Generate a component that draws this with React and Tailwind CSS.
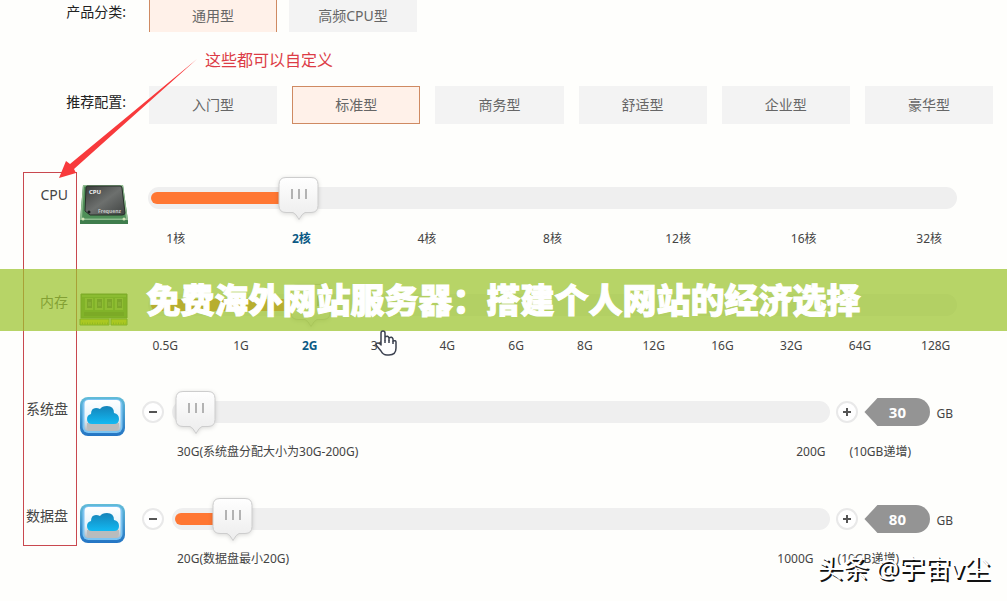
import { useState } from "react";
import clsx from "clsx";

const categories = ["通用型", "高频CPU型"];
const presets = ["入门型", "标准型", "商务型", "舒适型", "企业型", "豪华型"];
const cpuStops = ["1核", "2核", "4核", "8核", "12核", "16核", "32核"];
const memoryStops = [
  "0.5G",
  "1G",
  "2G",
  "3G",
  "4G",
  "6G",
  "8G",
  "12G",
  "16G",
  "32G",
  "64G",
  "128G",
];

// Icons
const CpuIcon = () => (
  <svg viewBox="0 -2 50 44" className="h-[44px] w-[50px]" aria-hidden="true">
    <defs>
      <linearGradient id="chip" x1="0" y1="0" x2="1" y2="1">
        <stop offset="0" stopColor="#3a3c3b" />
        <stop offset="0.5" stopColor="#6d706e" />
        <stop offset="1" stopColor="#3f4241" />
      </linearGradient>
    </defs>
    <path d="M4 1h40l5 36v3H1v-3z" fill="#3f7d4c" />
    <path d="M4 1h40l5 35H1z" fill="#8fbb8f" />
    <path d="M5 2.500h38l4 32H3z" fill="#4f8f58" />
    <path d="M8 2h33q2 0 2 2l3 25q0 2-3 2H11l-5-4L7 4q0-2 1-2z" fill="url(#chip)" stroke="#263029" />
    <circle cx="4" cy="35" r="1.500" fill="#cfe3b5" />
    <circle cx="45" cy="35" r="1.500" fill="#cfe3b5" />
    <circle cx="10" cy="28" r="1.500" fill="#1c1f1e" />
    <text x="10" y="10" fontSize="6" fontWeight="700" fill="#f1f1f1">CPU</text>
    <text x="19" y="29" fontSize="5" fontWeight="700" fill="#c4c7c5">Frequenz</text>
  </svg>
);

const MemoryIcon = () => (
  <svg viewBox="0 -1 50 42" className="h-[42px] w-[50px]" aria-hidden="true">
    <path d="M2 4h46v24H2z" fill="#3f8a1f" stroke="#2f6d1a" />
    <path d="M3 5h44v2H3z" fill="#63a83c" />
    {[6, 16, 26, 36].map((x) => (
      <g key={x}>
        <path d={`M${x} 8h8v12h-8z`} fill="#6fae3d" />
        <path d={`M${x + 2} 9h5v9h-5z`} fill="#2c5c22" />
        <path d={`M${x + 3} 12h3v4h-3z`} fill="#4f7a44" />
      </g>
    ))}
    <path d="M5 22h40v4H5z" fill="#2b6a12" />
    <path d="M1 29h29v6H1zM32 29h16v6H32z" fill="#cfd400" stroke="#4f8a1a" />
    <path d="M3 33.500h26M34 33.500h13" stroke="#7d9c00" strokeDasharray="1 1.500" strokeWidth="2" />
  </svg>
);

const CloudIcon = ({ id }) => (
  <svg viewBox="-1 0 50 42" className="h-[42px] w-[50px]" aria-hidden="true">
    <defs>
      <linearGradient id={`${id}-frame`} x1="0" y1="0" x2="0" y2="1">
        <stop offset="0" stopColor="#62bcd8" />
        <stop offset="1" stopColor="#2475c4" />
      </linearGradient>
      <linearGradient id={`${id}-inner`} x1="0" y1="0" x2="0" y2="1">
        <stop offset="0" stopColor="#ffffff" />
        <stop offset="0.600" stopColor="#e6f3fb" />
        <stop offset="1" stopColor="#b4b9bf" />
      </linearGradient>
      <linearGradient id={`${id}-cloud`} x1="0" y1="0" x2="0" y2="1">
        <stop offset="0" stopColor="#1583b9" />
        <stop offset="1" stopColor="#12b9f2" />
      </linearGradient>
    </defs>
    <rect x="0" y="1" width="45" height="39" rx="8" fill={`url(#${id}-frame)`} />
    <rect x="2.500" y="3" width="40" height="34" rx="6" fill="#7cc4f2" />
    <rect x="4.500" y="4" width="36" height="31" rx="4" fill={`url(#${id}-inner)`} />
    <path d="M7 27h32v4q-1 4-5 4H12q-5 0-5-4z" fill="#b9bcbd" />
    <path
      d="M12 28q-5 0-5-5 0-4 4-5 0-6 5-6 2 0 4 1 2-3 7-3 7 0 7 7 5 1 5 6 0 5-5 5z"
      fill={`url(#${id}-cloud)`}
    />
  </svg>
);

const Handle = () => (
  <svg viewBox="0 0 41 44" className="h-[44px] w-[41px] overflow-visible drop-shadow-sm" aria-hidden="true">
    <defs>
      <linearGradient id="handle" x1="0" y1="0" x2="0" y2="1">
        <stop offset="0" stopColor="#ffffff" />
        <stop offset="1" stopColor="#ececec" />
      </linearGradient>
    </defs>
    <path
      d="M8 1.500h25q7 0 7 7v21q0 7-7 7h-6q-3 1-6 7-3-6-6-7H8q-7 0-7-7v-21q0-7 7-7z"
      fill="url(#handle)"
      stroke="#cdcdcd"
    />
    <path d="M14 13v10M21 13v10M28 13v10" stroke="#b3b3b3" strokeWidth="2" />
  </svg>
);

const HandCursor = () => (
  <svg viewBox="0 0 22 26" className="h-[26px] w-[22px]" aria-hidden="true">
    <path
      d="M6 15V3q0-2 2-2t2 2v7-3q3-2 4 1v2-2q3-2 4 1v2q3-1 3 1v6q0 7-7 7h-2q-4 0-6-4l-5-6q0-2 2-2t3 2z"
      fill="#fff"
      stroke="#3c4250"
      strokeWidth="1.500"
      strokeLinejoin="round"
    />
    <path d="M10 10v3M14 10v3M18 11v3" stroke="#3c4250" strokeWidth="1.500" />
  </svg>
);

const Option = ({ active, className, children, ...rest }) => (
  <button
    type="button"
    aria-pressed={active}
    className={clsx(
      "text-sm text-[#666]",
      active ? "border-[#cf8a62] bg-[#fff1e9]" : "border-transparent bg-[#f3f3f3]",
      className
    )}
    {...rest}
  >
    {children}
  </button>
);

const Slider = ({ id, min, max, step = 1, value, onChange }) => {
  const ratio = (value - min) / (max - min);
  return (
    <div className="relative flex h-11 items-center">
      <div className="h-[22px] w-full rounded-full bg-[#efefef]" />
      <div className="absolute inset-x-[3px] inset-y-0">
        {ratio > 0 && (
          <div
            className="absolute left-0 top-4 h-3 rounded-l-full bg-[#ff7733]"
            style={{ width: `calc(${ratio} * (100% - 41px) + 8px)` }}
          />
        )}
        <div className="absolute top-0" style={{ left: `calc(${ratio} * (100% - 41px))` }}>
          <Handle />
        </div>
        <input
          id={id}
          type="range"
          min={min}
          max={max}
          step={step}
          value={value}
          onChange={(e) => onChange(Number(e.target.value))}
          className="absolute inset-0 h-full w-full cursor-pointer opacity-0"
        />
      </div>
    </div>
  );
};

const SpecRow = ({ id, label, icon, children }) => (
  <div className="flex h-[107px] items-start">
    <label htmlFor={id} className="w-[68px] shrink-0 text-right text-sm leading-[38px] text-[#444]">
      {label}
    </label>
    <div className="ml-[11px] mt-[6px] shrink-0">{icon}</div>
    {children}
  </div>
);

const StopSlider = ({ id, stops, initial, gridClass }) => {
  const [index, setIndex] = useState(initial);
  return (
    <div className="ml-[19px] mr-[50px] flex-1">
      <Slider id={id} min={0} max={stops.length - 1} value={index} onChange={setIndex} />
      <ul className={clsx("grid text-center text-xs leading-[38px]", gridClass)}>
        {stops.map((stop, i) => (
          <li key={stop} className={i === index ? "font-bold text-[#0b5a85]" : "text-[#444]"}>
            {stop}
          </li>
        ))}
      </ul>
    </div>
  );
};

const RoundButton = ({ label, children, onClick }) => (
  <button
    type="button"
    aria-label={label}
    onClick={onClick}
    className="flex size-[22px] shrink-0 items-center justify-center rounded-full border-2 border-[#e9e9e9] bg-white"
  >
    <svg viewBox="0 0 10 10" className="size-[10px]" stroke="#555" strokeWidth="2" aria-hidden="true">
      {children}
    </svg>
  </button>
);

const DiskSlider = ({ id, min, max, initial, minText, maxText, noteClass }) => {
  const [size, setSize] = useState(initial);
  const update = (next) => setSize(Math.min(max, Math.max(min, next)));

  return (
    <div className="ml-[13px] mr-[54px] flex-1">
      <div className="flex items-center">
        <RoundButton label="减少" onClick={() => update(size - 10)}>
          <path d="M1 5h8" />
        </RoundButton>
        <div className="ml-2 mr-[6px] flex-1">
          <Slider id={id} min={min} max={max} step={10} value={size} onChange={update} />
        </div>
        <RoundButton label="增加" onClick={() => update(size + 10)}>
          <path d="M1 5h8M5 1v8" />
        </RoundButton>
        <input
          type="text"
          aria-label="容量"
          value={size}
          onChange={(e) => update(Number(e.target.value) || min)}
          className="ml-[6px] h-7 w-[66px] rounded-r-full bg-[#949494] text-center text-[15px] font-bold text-white [clip-path:polygon(13px_0,100%_0,100%_100%,13px_100%,0_50%)]"
        />
        <span className="ml-[6px] pt-1 text-xs text-[#444]">GB</span>
      </div>
      <div className={clsx("flex justify-between pl-[35px] text-xs leading-9 text-[#444]", noteClass)}>
        <span>{minText}</span>
        <span className="flex gap-6">
          <span>{maxText}</span>
          <span>(10GB递增)</span>
        </span>
      </div>
    </div>
  );
};

export default function App() {
  const [category, setCategory] = useState("通用型");
  const [preset, setPreset] = useState("标准型");

  return (
    <main className="relative min-h-screen overflow-hidden bg-[#fefefc] font-['Noto_Sans','Noto_Sans_CJK_SC',sans-serif]">
      {/* Product category */}
      <section className="flex">
        <h2 className="w-[149px] shrink-0 pr-[23px] text-right text-sm leading-6 text-[#222]">产品分类:</h2>
        <div className="flex gap-3">
          {categories.map((name) => (
            <Option
              key={name}
              active={name === category}
              onClick={() => setCategory(name)}
              className="h-8 w-32 border-x"
            >
              {name}
            </Option>
          ))}
        </div>
      </section>

      {/* Presets */}
      <section className="mt-[54px] flex">
        <h2 className="w-[149px] shrink-0 pr-[23px] text-right text-sm leading-8 text-[#222]">推荐配置:</h2>
        <div className="grid flex-1 grid-cols-6 gap-[15px] pr-[14px]">
          {presets.map((name) => (
            <Option
              key={name}
              active={name === preset}
              onClick={() => setPreset(name)}
              className="h-[38px] border"
            >
              {name}
            </Option>
          ))}
        </div>
      </section>

      {/* Specs */}
      <section className="relative mt-[52px]">
        <SpecRow id="cpu" label="CPU" icon={<CpuIcon />}>
          <StopSlider id="cpu" stops={cpuStops} initial={1} gridClass="-mx-[35px] grid-cols-7" />
        </SpecRow>
        <SpecRow id="memory" label="内存" icon={<MemoryIcon />}>
          <StopSlider
            id="memory"
            stops={memoryStops}
            initial={2}
            gridClass="-ml-6 -mr-5 grid-cols-[6fr_repeat(10,5fr)_6fr]"
          />
        </SpecRow>
        <SpecRow id="system" label="系统盘" icon={<CloudIcon id="system-cloud" />}>
          <DiskSlider
            id="system"
            min={30}
            max={200}
            initial={30}
            minText="30G(系统盘分配大小为30G-200G)"
            maxText="200G"
            noteClass="pr-[42px]"
          />
        </SpecRow>
        <SpecRow id="data" label="数据盘" icon={<CloudIcon id="data-cloud" />}>
          <DiskSlider
            id="data"
            min={20}
            max={1000}
            initial={80}
            minText="20G(数据盘最小20G)"
            maxText="1000G"
            noteClass="pr-[54px]"
          />
        </SpecRow>
        <div className="pointer-events-none absolute -top-1 left-[23px] h-[374px] w-[54px] border border-[#c9484f]" />
      </section>

      {/* Annotation */}
      <p className="pointer-events-none absolute left-[205px] top-12 text-base leading-6 text-[#dc3c46]">
        这些都可以自定义
      </p>
      <svg
        viewBox="0 0 140 120"
        className="pointer-events-none absolute left-[58px] top-[59px] h-[120px] w-[140px]"
        aria-hidden="true"
      >
        <path d="M1 119 8 102 12 105 139 0 16 110 18 114z" fill="#f83a3c" />
      </svg>

      {/* Title banner */}
      <div className="pointer-events-none absolute inset-x-0 top-[269px] flex h-[62px] items-center justify-center bg-[#9bc42e]/72">
        <h1 className="whitespace-nowrap text-[34px] font-black leading-none text-white [-webkit-text-stroke:1px_#fff]">
          免费海外网站服务器：搭建个人网站的经济选择
        </h1>
      </div>

      <div className="pointer-events-none absolute left-[375px] top-[330px]">
        <HandCursor />
      </div>

      {/* Watermark */}
      <p className="pointer-events-none absolute right-[17px] top-[552px] text-[26px] leading-8 text-white [text-shadow:2px_2px_0_#111]">
        头条 @宇宙v尘
      </p>
    </main>
  );
}
